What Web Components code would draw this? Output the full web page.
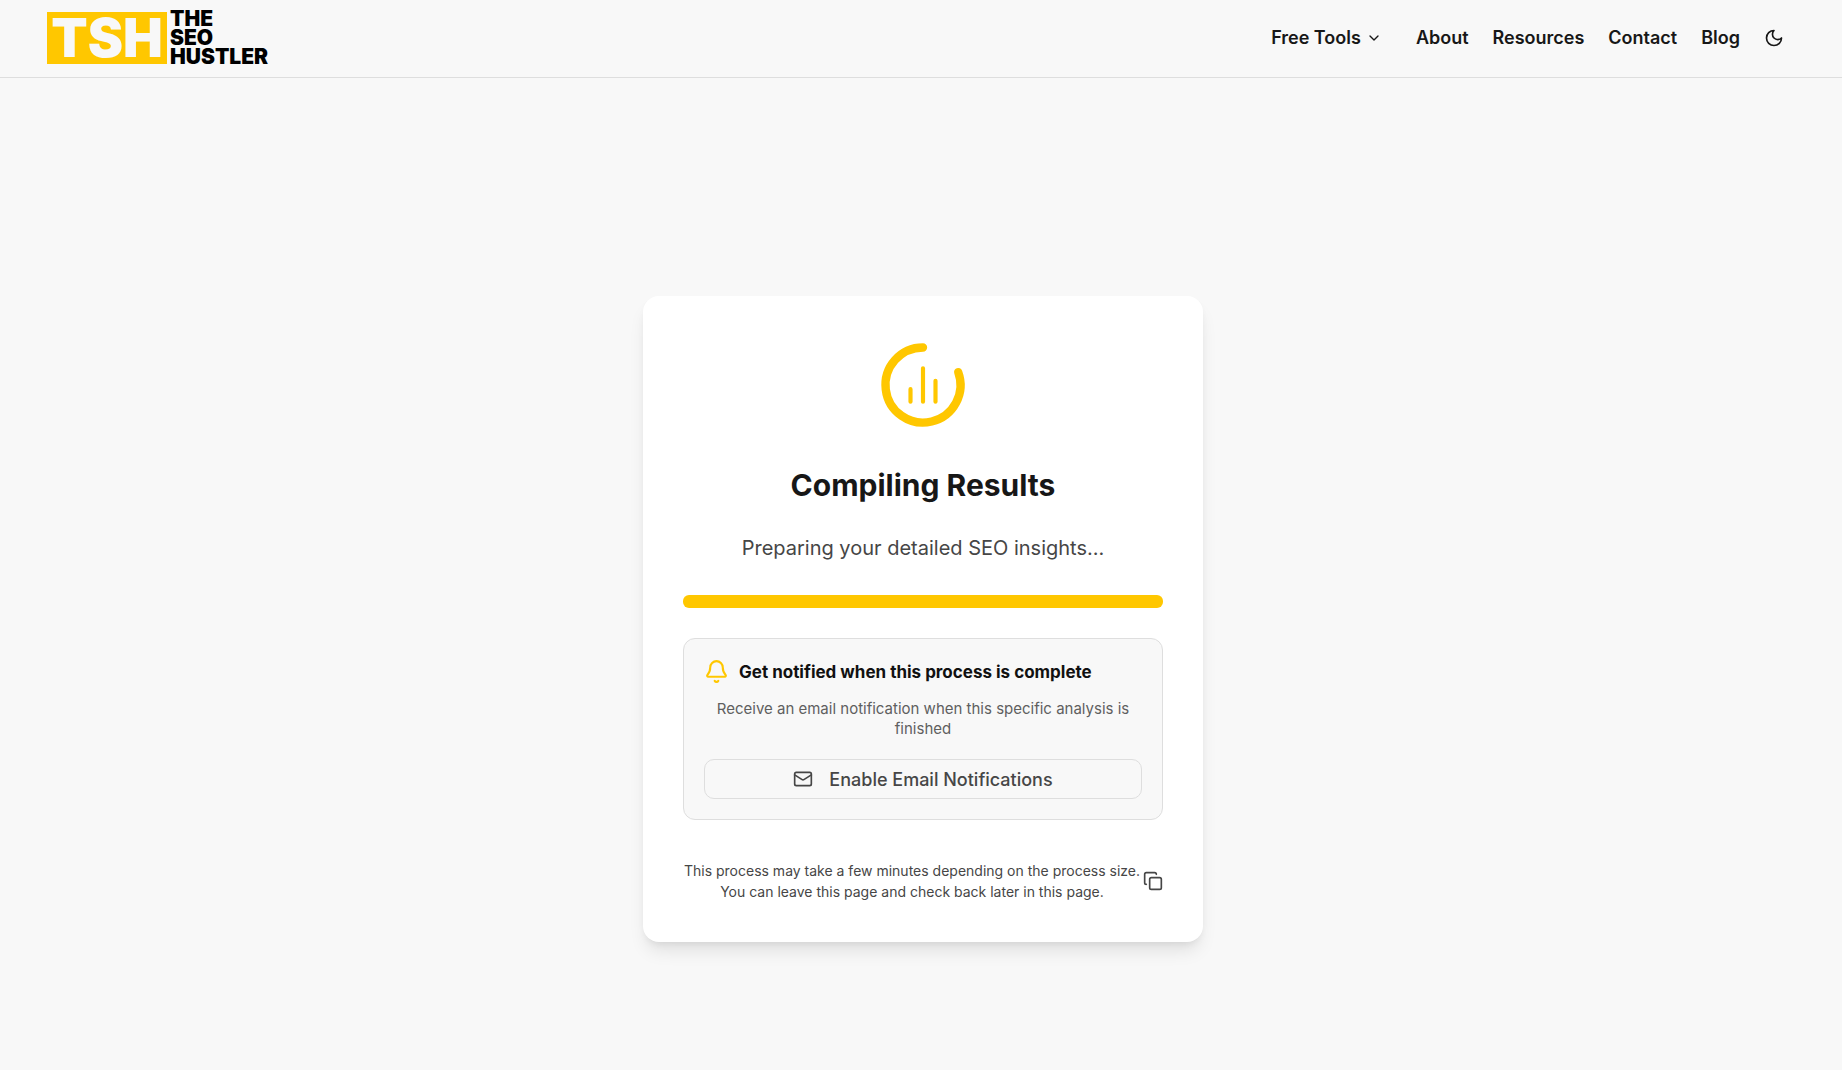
<!DOCTYPE html>
<html lang="en">
<head>
<meta charset="utf-8">
<meta name="viewport" content="width=device-width, initial-scale=1">
<title>The SEO Hustler</title>
<style>
  :root {
    --page: #f8f8f8;
    --ink: #171717;
    --soft: #464646;
    --muted: #5f5f5f;
    --line: #dedede;
    --brand: #ffc700;
  }
  body {
    margin: 0;
    min-height: 100vh;
    background: var(--page);
    color: var(--ink);
    font-family: Inter, "Liberation Sans", sans-serif;
    font-size: 18px;
    overflow-x: hidden;
  }
</style>
</head>
<body>
<site-header></site-header>
<page-main>
  <progress-card heading="Compiling Results" status="Preparing your detailed SEO insights...">
    <notify-panel>
      <span slot="title">Get notified when this process is complete</span>
      <span slot="text">Receive an email notification when this specific analysis is finished</span>
      <span slot="action">Enable Email Notifications</span>
    </notify-panel>
    <copy-note>This process may take a few minutes depending on the process size. You can leave this page and check back later in this page.</copy-note>
  </progress-card>
</page-main>
<script>
  const define = (name, html, setup) => customElements.define(name, class extends HTMLElement {
    constructor() {
      super();
      this.attachShadow({ mode: 'open' }).innerHTML = html;
    }
    connectedCallback() {
      if (setup) setup(this, this.shadowRoot);
    }
  });

  define('site-logo', `
    <style>
      :host { display: block; }
      a { display: flex; align-items: center; gap: 3px; color: #000; text-decoration: none; font-weight: 900; }
      .mark { display: flex; align-items: center; justify-content: center; width: 120px; height: 52px;
              background: var(--brand); color: var(--page); font-size: 53px; line-height: 52px; }
      .name { font-size: 21px; line-height: 19px; }
      .name span { display: block; }
    </style>
    <a href="#"><span class="mark">TSH</span>
      <span class="name"><span>THE</span><span>SEO</span><span>HUSTLER</span></span></a>`);

  define('site-header', `
    <style>
      :host { display: block; border-bottom: 1px solid var(--line); }
      header { display: flex; align-items: center; justify-content: space-between; height: 77px; padding: 0 58px 2px 47px; box-sizing: border-box; }
      nav { display: flex; align-items: center; gap: 24px; font-size: 18px; line-height: 24px; font-weight: 600; }
      a { color: inherit; text-decoration: none; }
      button { display: flex; align-items: center; border: 0; padding: 0; background: none; color: inherit; font: inherit; cursor: pointer; }
      .menu { gap: 5px; padding-right: 10px; }
      svg { display: block; fill: none; stroke: currentColor; stroke-width: 2; stroke-linecap: round; stroke-linejoin: round; }
    </style>
    <header>
      <site-logo></site-logo>
      <nav aria-label="Main">
        <button class="menu" type="button" aria-haspopup="true">Free Tools
          <svg width="16" height="16" viewBox="0 0 24 24"><path d="m6 9 6 6 6-6"/></svg></button>
        <a href="#">About</a>
        <a href="#">Resources</a>
        <a href="#">Contact</a>
        <a href="#">Blog</a>
        <button type="button" aria-label="Switch to dark theme">
          <svg width="20" height="20" viewBox="0 0 24 24"><path d="M12 3a6 6 0 0 0 9 9 9 9 0 1 1-9-9Z"/></svg></button>
      </nav>
    </header>`);

  define('page-main', `
    <style>
      :host { display: block; }
      main { display: flex; justify-content: center; padding: 218px 16px 64px 20px; }
    </style>
    <main><slot></slot></main>`);

  define('progress-ring', `
    <style>
      :host { display: block; }
      svg { display: block; width: 100px; height: 100px; fill: none; stroke: var(--brand); stroke-linecap: round; }
    </style>
    <svg viewBox="0 0 24 24" aria-hidden="true">
      <path stroke-width="2" d="M12 3A9 9 0 1 0 20.45 8.9"/>
      <path stroke-width="1" d="M9 16v-3M12 16V8M15 16v-5"/>
    </svg>`);

  define('progress-card', `
    <style>
      :host { display: block; width: 100%; max-width: 560px; }
      section { display: flex; flex-direction: column; align-items: center; padding: 39px 40px 40px; border-radius: 16px;
                background: #fff; box-shadow: 0 12px 18px -4px rgb(0 0 0 / .1), 0 4px 8px -4px rgb(0 0 0 / .1); }
      h1 { margin: 32px 0 0; font-size: 30px; line-height: 36px; font-weight: 700; }
      p { margin: 30px 0 32px; font-size: 20px; line-height: 30px; color: var(--soft); }
      .bar { align-self: stretch; height: 13px; border-radius: 6px; background: var(--brand); }
      slot { display: flex; flex-direction: column; align-self: stretch; gap: 40px; margin-top: 30px; }
    </style>
    <section>
      <progress-ring></progress-ring>
      <h1></h1>
      <p></p>
      <div class="bar" role="progressbar" aria-valuenow="100" aria-label="Progress"></div>
      <slot></slot>
    </section>`, (host, root) => {
      root.querySelector('h1').textContent = host.getAttribute('heading');
      root.querySelector('p').textContent = host.getAttribute('status');
    });

  define('notify-panel', `
    <style>
      :host { display: block; }
      section { padding: 20px; border: 1px solid var(--line); border-radius: 12px; background: var(--page); }
      h2 { display: flex; align-items: center; gap: 10px; margin: 0; font-size: 17px; line-height: 24px; font-weight: 700; color: #111; }
      p { margin: 15px 0 20px; font-size: 15px; line-height: 20px; text-align: center; color: var(--muted); }
      svg { display: block; flex: none; fill: none; stroke: currentColor; stroke-width: 2; stroke-linecap: round; stroke-linejoin: round; }
      h2 svg { color: var(--brand); }
      button { display: flex; align-items: center; justify-content: center; gap: 16px; width: 100%; height: 40px; padding: 0;
               border: 1px solid var(--line); border-radius: 10px; background: none; color: var(--soft);
               font: inherit; font-size: 18px; font-weight: 500; cursor: pointer; }
    </style>
    <section>
      <h2><svg width="25" height="25" viewBox="0 0 24 24"><path d="M10.268 21a2 2 0 0 0 3.464 0"/><path d="M3.262 15.326A1 1 0 0 0 4 17h16a1 1 0 0 0 .74-1.673C19.41 13.956 18 12.499 18 8A6 6 0 0 0 6 8c0 4.499-1.411 5.956-2.738 7.326"/></svg>
        <slot name="title"></slot></h2>
      <p><slot name="text"></slot></p>
      <button type="button"><svg width="20" height="20" viewBox="0 0 24 24"><rect width="20" height="16" x="2" y="4" rx="2"/><path d="m22 7-8.97 5.7a1.94 1.94 0 0 1-2.06 0L2 7"/></svg>
        <slot name="action"></slot></button>
    </section>`);

  define('copy-note', `
    <style>
      :host { display: flex; align-items: center; gap: 2px; }
      p { flex: 1; margin: 0; font-size: 14px; line-height: 21px; text-align: center; color: var(--soft); }
      button { flex: none; border: 0; padding: 0; background: none; color: var(--soft); cursor: pointer; }
      svg { display: block; fill: none; stroke: currentColor; stroke-width: 2; stroke-linecap: round; stroke-linejoin: round; }
    </style>
    <p><slot></slot></p>
    <button type="button" aria-label="Copy link"><svg width="20" height="20" viewBox="0 0 24 24"><rect width="14" height="14" x="8" y="8" rx="2"/><path d="M4 16c-1.1 0-2-.9-2-2V4c0-1.1.9-2 2-2h10c1.1 0 2 .9 2 2"/></svg></button>`);
</script>
</body>
</html>
